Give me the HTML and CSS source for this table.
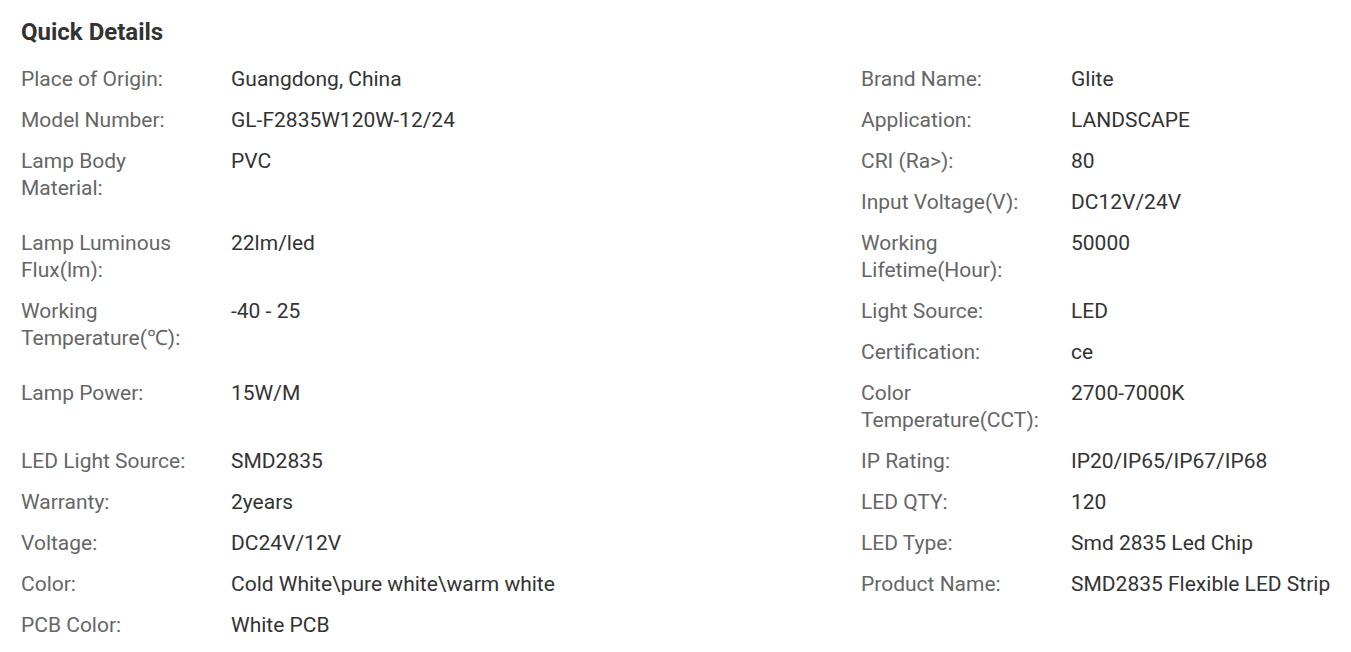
FILE: index.html
```html
<!DOCTYPE html>
<html lang="en">
<head>
<meta charset="utf-8">
<title>Quick Details</title>
<link rel="stylesheet" href="styles.css">
</head>
<body>
<section class="details">
  <h2 class="title">Quick Details</h2>
  <div class="grid">
    <div class="item"><span class="label">Place of Origin:</span><span class="value">Guangdong, China</span></div>
    <div class="item"><span class="label">Brand Name:</span><span class="value">Glite</span></div>
    <div class="item"><span class="label">Model Number:</span><span class="value">GL-F2835W120W-12/24</span></div>
    <div class="item"><span class="label">Application:</span><span class="value">LANDSCAPE</span></div>
    <div class="item span2"><span class="label">Lamp Body Material:</span><span class="value">PVC</span></div>
    <div class="item"><span class="label">CRI (Ra&gt;):</span><span class="value">80</span></div>
    <div class="item"><span class="label">Input Voltage(V):</span><span class="value">DC12V/24V</span></div>
    <div class="item"><span class="label">Lamp Luminous Flux(lm):</span><span class="value">22lm/led</span></div>
    <div class="item"><span class="label">Working Lifetime(Hour):</span><span class="value">50000</span></div>
    <div class="item span2"><span class="label">Working Temperature(℃):</span><span class="value">-40 - 25</span></div>
    <div class="item"><span class="label">Light Source:</span><span class="value">LED</span></div>
    <div class="item"><span class="label">Certification:</span><span class="value">ce</span></div>
    <div class="item"><span class="label">Lamp Power:</span><span class="value">15W/M</span></div>
    <div class="item"><span class="label">Color Temperature(CCT):</span><span class="value">2700-7000K</span></div>
    <div class="item"><span class="label">LED Light Source:</span><span class="value">SMD2835</span></div>
    <div class="item"><span class="label">IP Rating:</span><span class="value">IP20/IP65/IP67/IP68</span></div>
    <div class="item"><span class="label">Warranty:</span><span class="value">2years</span></div>
    <div class="item"><span class="label">LED QTY:</span><span class="value">120</span></div>
    <div class="item"><span class="label">Voltage:</span><span class="value">DC24V/12V</span></div>
    <div class="item"><span class="label">LED Type:</span><span class="value">Smd 2835 Led Chip</span></div>
    <div class="item"><span class="label">Color:</span><span class="value">Cold White\pure white\warm white</span></div>
    <div class="item"><span class="label">Product Name:</span><span class="value">SMD2835 Flexible LED Strip</span></div>
    <div class="item"><span class="label">PCB Color:</span><span class="value">White PCB</span></div>
  </div>
</section>
</body>
</html>
```
FILE: styles.css
```css
html, body {
  margin: 0;
  padding: 0;
  background: #fff;
}
body {
  font-family: Roboto, "Liberation Sans", Arial, sans-serif;
}
.details {
  padding: 17px 0 0 21px;
}
.title {
  margin: 0 0 19px;
  font-size: 24px;
  line-height: 30px;
  font-weight: 700;
  color: #333;
}
.grid {
  display: grid;
  grid-template-columns: 840px 1fr;
  align-items: start;
}
.item {
  display: flex;
  font-size: 21px;
  line-height: 27px;
  margin-bottom: 14px;
}
.span2 {
  grid-row: span 2;
}
.label {
  flex: 0 0 185px;
  margin-right: 25px;
  color: #666;
}
.value {
  flex: 1;
  color: #333;
}
```
